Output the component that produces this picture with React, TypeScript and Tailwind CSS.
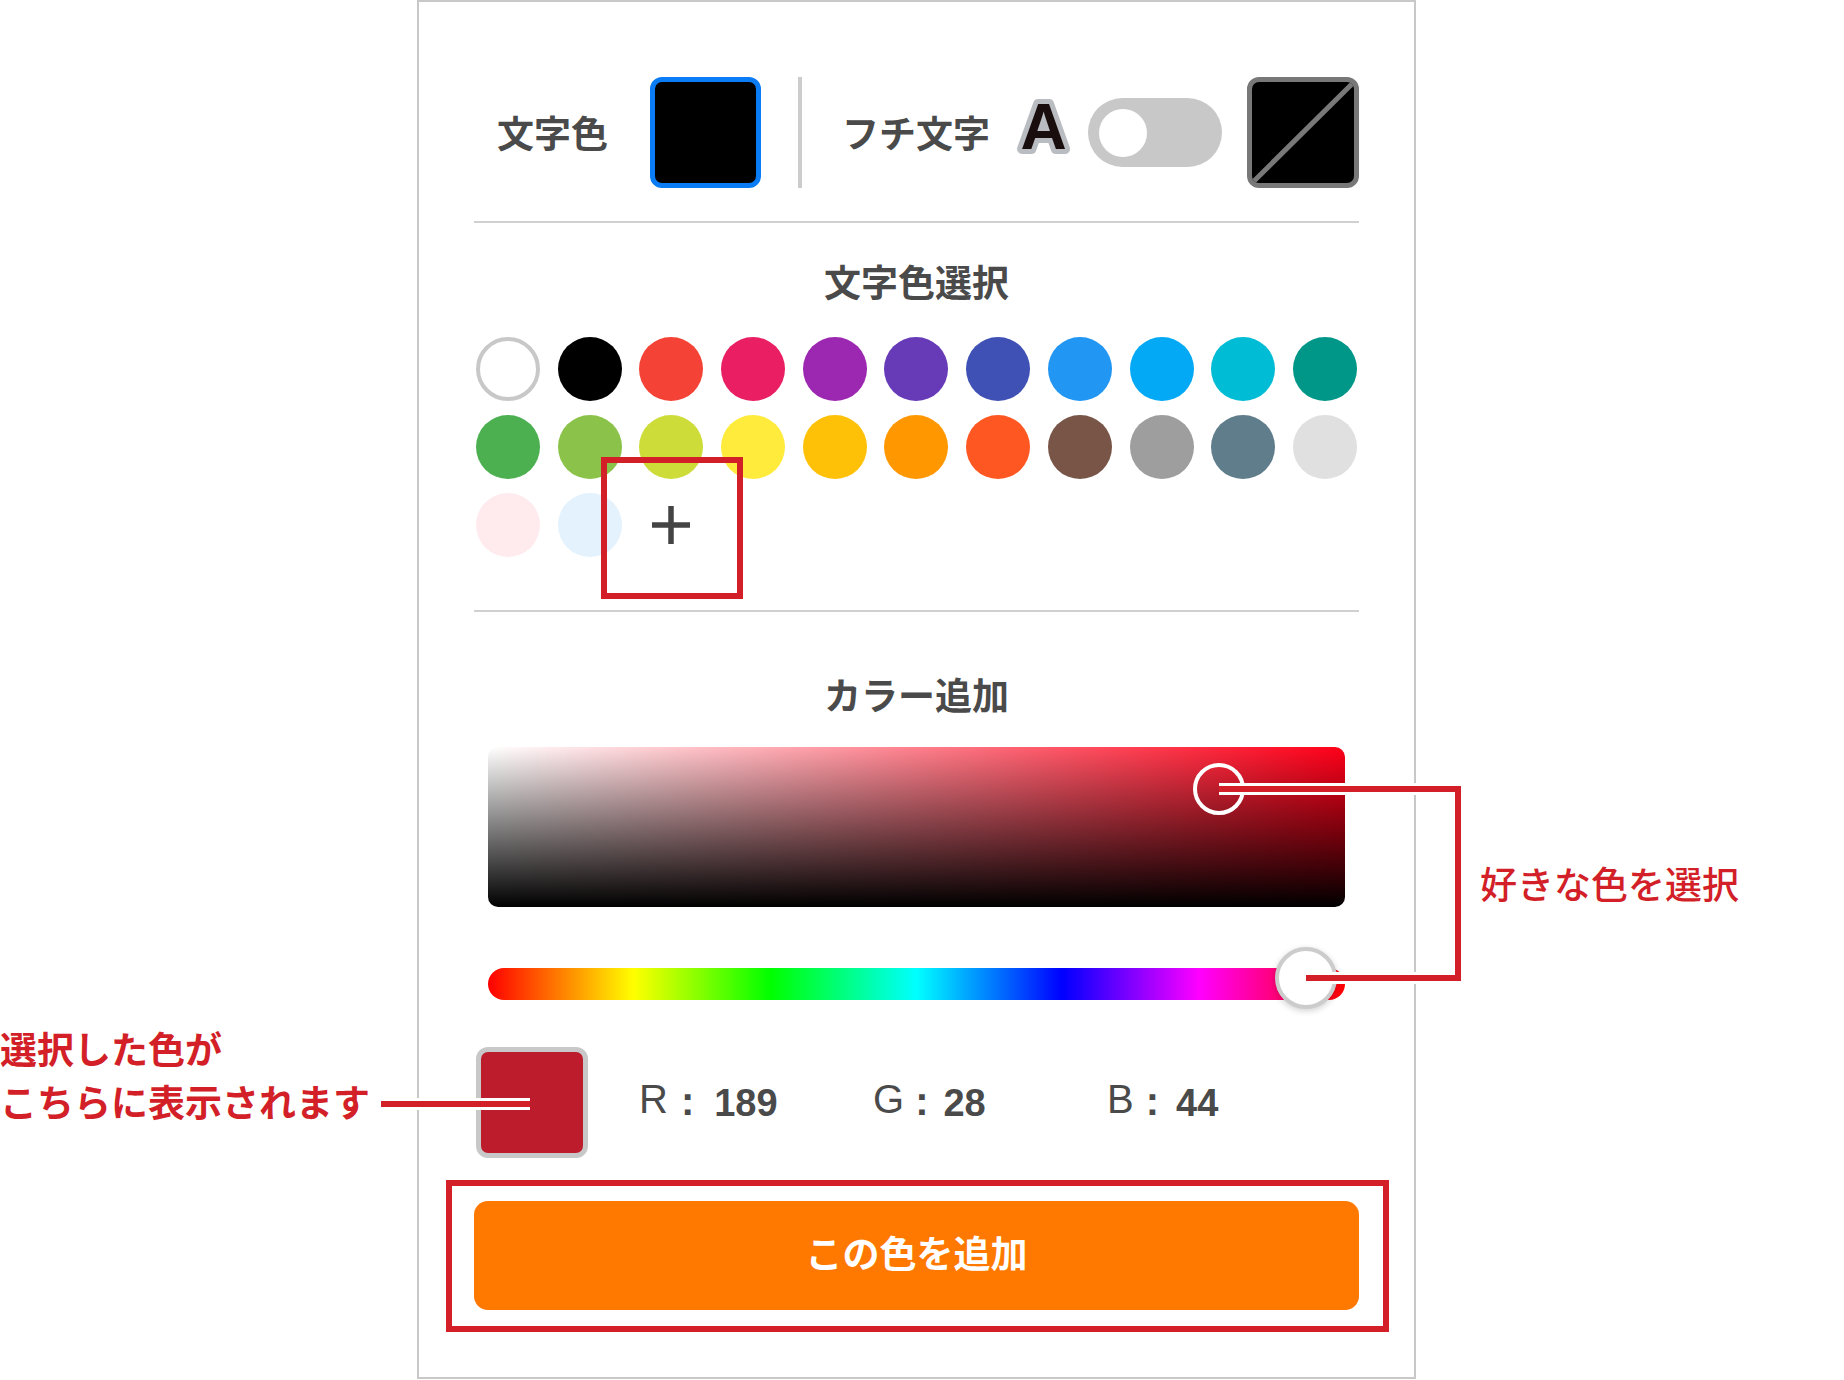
const jp = "font-['Noto_Sans_CJK_JP',sans-serif]";
const latin = "font-['Liberation_Sans','Noto_Sans_CJK_JP',sans-serif]";

const swatches = [
  "border-[4px] border-[#c8c8c8] bg-white",
  "bg-[#000000]",
  "bg-[#f44336]",
  "bg-[#e91e63]",
  "bg-[#9c27b0]",
  "bg-[#673ab7]",
  "bg-[#3f51b5]",
  "bg-[#2196f3]",
  "bg-[#03a9f4]",
  "bg-[#00bcd4]",
  "bg-[#009688]",
  "bg-[#4caf50]",
  "bg-[#8bc34a]",
  "bg-[#cddc39]",
  "bg-[#ffeb3b]",
  "bg-[#ffc107]",
  "bg-[#ff9800]",
  "bg-[#ff5722]",
  "bg-[#795548]",
  "bg-[#9e9e9e]",
  "bg-[#607d8b]",
  "bg-[#e0e0e0]",
  "bg-[#ffebee]",
  "bg-[#e3f2fd]",
];

const rgb = [
  { label: "R", value: "189", colon: "ml-[13px]", num: "ml-[20px]" },
  { label: "G", value: "28", colon: "ml-[11px]", num: "ml-[15px]" },
  { label: "B", value: "44", colon: "ml-[12px]", num: "ml-[17px]" },
];

function OutlinedA() {
  return (
    <svg width="60" height="111" viewBox="0 0 60 111" aria-hidden="true">
      <text
        x="30.5"
        y="72"
        textAnchor="middle"
        fontFamily="Liberation Sans, Arial, sans-serif"
        fontWeight="700"
        fontSize="64"
        fill="#1a0d0d"
        stroke="#b9bcc0"
        strokeWidth="10"
        strokeLinejoin="round"
        paintOrder="stroke"
      >
        A
      </text>
    </svg>
  );
}

function PlusIcon() {
  return (
    <svg width="40" height="40" viewBox="0 0 40 40" aria-hidden="true">
      <path d="M20 1v38M1 20h38" stroke="#444" strokeWidth="5.5" fill="none" />
    </svg>
  );
}

export default function App() {
  return (
    <div className="relative h-[1380px] w-[1844px] overflow-hidden bg-white">
      <div className="ml-[417px] flex h-[1379px] w-[999px] flex-col border-2 border-[#c8c8c8] px-[55px] pt-[75px]">
        {/* 文字色 / フチ文字 */}
        <div className="flex h-[111px] items-center">
          <span className={`ml-[23px] text-[37px] font-bold leading-none text-[#4a4a4a] ${jp}`}>
            文字色
          </span>
          <div className="ml-[42px] h-[111px] w-[111px] rounded-[12px] border-[5px] border-[#0a7cf5] bg-black" />
          <div className="ml-[37px] h-[111px] w-[4px] bg-[#cccccc]" />
          <span className={`ml-[40px] text-[37px] font-bold leading-none text-[#4a4a4a] ${jp}`}>
            フチ文字
          </span>
          <div className="ml-[23px]">
            <OutlinedA />
          </div>
          <div className="ml-[15px] flex h-[69px] w-[134px] items-center rounded-full bg-[#c8c8c8] pl-[11px]">
            <div className="h-[48px] w-[48px] rounded-full bg-white" />
          </div>
          <div className="ml-[25px] h-[111px] w-[112px] overflow-hidden rounded-[12px] border-[5px] border-[#787878] bg-black">
            <svg className="h-full w-full" viewBox="0 0 100 100" preserveAspectRatio="none" aria-hidden="true">
              <line x1="0" y1="100" x2="100" y2="0" stroke="#787878" strokeWidth="5" />
            </svg>
          </div>
        </div>

        <div className="mt-[33px] h-[2px] bg-[#d0d0d0]" />

        <h2 className={`mt-[40px] text-center text-[37px] font-bold leading-none text-[#4a4a4a] ${jp}`}>
          文字色選択
        </h2>

        <div className="mx-[2px] mt-[37px] grid grid-cols-[repeat(11,64px)] justify-between gap-y-[14px]">
          {swatches.map((cls, i) => (
            <div key={i} className={`h-[64px] w-[64px] rounded-full ${cls}`} />
          ))}
          <div className="flex h-[64px] w-[64px] items-center justify-center">
            <PlusIcon />
          </div>
        </div>

        <div className="mt-[53px] h-[2px] bg-[#d0d0d0]" />

        <h2 className={`mt-[64px] text-center text-[37px] font-bold leading-none text-[#4a4a4a] ${jp}`}>
          カラー追加
        </h2>

        {/* saturation / value */}
        <div className="relative mx-[14px] mt-[34px] h-[160px] rounded-[10px] bg-[#ff0019] bg-[linear-gradient(to_top,#000,rgba(0,0,0,0)),linear-gradient(to_right,#fff,rgba(255,255,255,0))]">
          <div className="absolute left-[705px] top-[16px] h-[52px] w-[52px] rounded-full border-[4px] border-white" />
        </div>

        {/* hue */}
        <div className="relative mx-[14px] mt-[61px] h-[32px] rounded-full bg-[linear-gradient(to_right,#f00_0%,#ff0_17%,#0f0_33%,#0ff_50%,#00f_67%,#f0f_83%,#f00_100%)]">
          <div className="absolute left-[787px] top-[-21px] h-[62px] w-[62px] rounded-full border-[4px] border-[#cccccc] bg-white shadow-[0_2px_6px_rgba(0,0,0,0.18)]" />
        </div>

        {/* selected colour */}
        <div className="mt-[47px] flex h-[111px] items-center">
          <div className="ml-[2px] h-[111px] w-[112px] rounded-[12px] border-[5px] border-[#c8c8c8] bg-[#bd1c2d]" />
          <div className="ml-[51px] flex">
            {rgb.map((c) => (
              <div key={c.label} className={`flex w-[234px] items-center text-[#4a4a4a] ${latin}`}>
                <span className="-translate-y-[4px] text-[40px] leading-none">{c.label}</span>
                <span className={`${c.colon} -translate-y-[2px] text-[40px] font-bold leading-none`}>:</span>
                <span className={`${c.num} text-[38px] font-bold leading-none`}>{c.value}</span>
              </div>
            ))}
          </div>
        </div>

        <button
          type="button"
          className={`mt-[43px] h-[109px] rounded-[14px] bg-[#ff7800] pb-[6px] text-[37px] font-bold text-white ${jp}`}
        >
          この色を追加
        </button>
      </div>

      {/* annotations */}
      <div className="pointer-events-none absolute left-[601px] top-[457px] h-[142px] w-[142px] border-[6px] border-[#d21f28]" />
      <div className="pointer-events-none absolute left-[446px] top-[1180px] h-[152px] w-[943px] border-[6px] border-[#d21f28]" />

      <svg className="pointer-events-none absolute left-0 top-0" width="1844" height="1380" aria-hidden="true">
        <polyline points="1219,789 1458,789 1458,978 1306,978" fill="none" stroke="#fff" strokeWidth="12" />
        <polyline points="1219,789 1458,789 1458,978 1306,978" fill="none" stroke="#d21f28" strokeWidth="6" />
        <line x1="381" y1="1104" x2="530" y2="1104" stroke="#fff" strokeWidth="12" />
        <line x1="381" y1="1104" x2="530" y2="1104" stroke="#d21f28" strokeWidth="6" />
      </svg>

      <div className={`absolute left-0 top-[1022px] text-[37px] font-bold leading-[53px] text-[#d21f28] ${jp}`}>
        <p>選択した色が</p>
        <p>こちらに表示されます</p>
      </div>
      <p className={`absolute left-[1480px] top-[865px] text-[37px] font-medium leading-none text-[#d21f28] ${jp}`}>
        好きな色を選択
      </p>
    </div>
  );
}
